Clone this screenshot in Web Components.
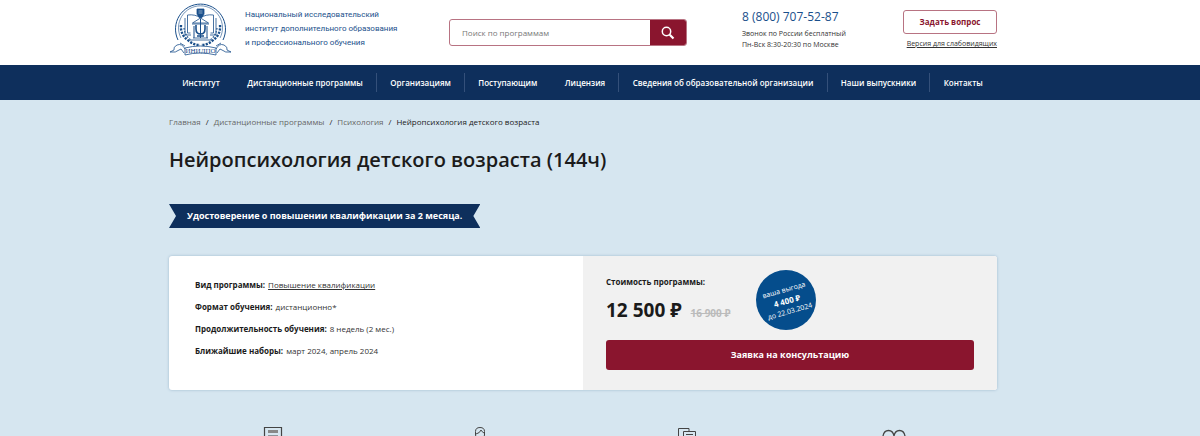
<!DOCTYPE html>
<html lang="ru">
<head>
<meta charset="utf-8">
<title>Нейропсихология детского возраста</title>
<style>
  :root { --navy:#0e2f5c; --wine:#8a152e; --blue:#1a4f8b; --sky:#d6e6f0; --left:169px; --right:203px; }
  body { margin:0; background:var(--sky); color:#1b1b1b; font:8px/12px "Open Sans","Noto Sans",sans-serif; overflow:hidden; }
</style>
</head>
<body>
<site-header></site-header>
<site-nav></site-nav>
<program-page></program-page>
<script>
const define = (name, html) => customElements.define(name, class extends HTMLElement {
  constructor() {
    super();
    const t = document.createElement('template');
    t.innerHTML = '<style>*{box-sizing:border-box}a{color:inherit}button,input{font:inherit;margin:0}</style>' + html;
    this.attachShadow({mode:'open'}).append(t.content.cloneNode(true));
  }
});

define('site-logo', `
<style>
  :host{display:block}
  a{display:flex;align-items:flex-start;gap:13px;color:var(--blue);text-decoration:none;font:8px/14px Roboto,"Open Sans",sans-serif}
  svg{display:block;flex:none;width:63px;height:54px}
  span{white-space:nowrap;padding-top:6px}
</style>
<a href="#">
<svg viewBox="0 2 63 54" fill="none" stroke="#1a4f8b" stroke-width=".8">
  <path d="M9 40A25 25 0 1 1 54 40" stroke-width="1"/>
  <path d="M12 38A22 22 0 1 1 51 38" stroke-width=".6"/>
  <path d="M28 9h7v5q-1 3-3.500 4q-2.500-1-3.500-4z" fill="#1a4f8b"/>
  <path d="M29.500 11h4M29.500 13h4" stroke="#fff" stroke-width=".5"/>
  <path d="M31.500 18q-5-4-13-3v18h3M31.500 18q5-4 13-3v18h-3M16 18v17h6M47 18v17h-6"/>
  <path d="M31.500 18l-8 5h16zM23 24h17M24 38h15M21 40h21"/>
  <path d="M31.500 19v19M25 26v12M38 26v12" stroke-width="1"/>
  <path d="M27 25v4q0 5 4.500 5t4.500-5v-4M28 36h7" stroke-width="1.600"/>
  <path d="M12 25q-1 10 8 16q5 4 11 4M51 25q1 10-8 16q-5 4-11 4" stroke-width="2.400" stroke-dasharray="2.200 1.200"/>
  <path d="M15 28q1 8 7 12M48 28q-1 8-7 12" stroke-width="1.200" stroke-dasharray="1.500 1.500"/>
  <path d="M16 48q15-4 31 0v7q-16-4-31 0zM16 49q-3-6-8-4q-4 2-3 5l-4 2q6 1 9-2l2-1l3 4M47 49q3-6 8-4q4 2 3 5l4 2q-6 1-9-2l-2-1l-3 4M11 43l5 3M52 43l-5 3" fill="#fff"/>
  <text x="31.500" y="53" text-anchor="middle" font-family="Liberation Serif, serif" font-size="7" fill="#1a4f8b" stroke="none">ИНИДПО</text>
</svg>
<span>Национальный исследовательский<br>институт дополнительного образования<br>и профессионального обучения</span>
</a>`);

define('search-box', `
<style>
  :host{display:block}
  form{display:flex;height:27px;border:1px solid #b87382;border-radius:3px;overflow:hidden;background:#fff}
  input{flex:1;min-width:0;border:0;outline:0;padding:0 12px;background:none;font-size:8px}
  input::placeholder{color:#777;opacity:1}
  button{width:36px;border:0;padding:0;background:var(--wine);display:grid;place-items:center}
  svg{width:14px;height:14px}
</style>
<form role="search"><input type="text" aria-label="Поиск" placeholder="Поиск по программам"><button type="button" aria-label="Найти"><svg viewBox="0 0 14 14" fill="none" stroke="#fff"><circle cx="5.500" cy="5.500" r="4.200" stroke-width="1.500"/><path d="M8.700 8.700l3.800 3.800" stroke-width="2.200"/></svg></button></form>`);

define('site-header', `
<style>
  :host{display:grid;grid-template-columns:280px 238px 1fr auto;align-items:start;min-height:65px;padding:0 var(--right) 0 var(--left);background:#fff}
  site-logo{padding-top:2px}
  search-box{padding-top:19px}
  .phone{padding:9px 0 0 55px;font-size:7px;line-height:11px;color:#333}
  .phone a{display:block;font-size:12px;line-height:16px;font-weight:500;color:var(--blue);text-decoration:none;margin-bottom:3px}
  .ask{display:flex;flex-direction:column;align-items:flex-end;padding-top:10px;gap:4px;font-size:7px;color:#333}
  button{width:94px;height:24px;padding:0;border:1px solid #b87382;border-radius:3px;background:#fff;color:var(--wine);font-size:8px;font-weight:700}
</style>
<site-logo></site-logo>
<search-box></search-box>
<div class="phone"><a href="tel:88007075287">8 (800) 707-52-87</a>Звонок по России бесплатный<br>Пн-Вск 8:30-20:30 по Москве</div>
<div class="ask"><button type="button">Задать вопрос</button><a href="#">Версия для слабовидящих</a></div>`);

define('site-nav', `
<style>
  :host{display:block;background:var(--navy);padding:0 var(--right) 0 var(--left)}
  nav{display:flex;align-items:center;height:35px}
  a{flex:1 1 auto;text-align:center;white-space:nowrap;line-height:19px;color:#fff;text-decoration:none;font-weight:600;font-size:8px;border-right:1px solid transparent}
  .line{border-color:#34507a}
</style>
<nav><a href="#">Институт</a><a href="#" class="line">Дистанционные программы</a><a href="#" class="line">Организациям</a><a href="#">Поступающим</a><a href="#" class="line">Лицензия</a><a href="#" class="line">Сведения об образовательной организации</a><a href="#" class="line">Наши выпускники</a><a href="#">Контакты</a></nav>`);

define('price-badge', `
<style>
  :host{display:grid;place-items:center;width:60px;height:60px;border-radius:50%;background:#054d8c;color:#fff;text-align:center;font-size:7px;line-height:11px}
  div{transform:rotate(-16deg);white-space:nowrap}
  b{display:block;font-size:8px}
</style>
<div><slot name="top"></slot><b><slot></slot></b><slot name="bottom"></slot></div>`);

define('program-card', `
<style>
  :host{display:grid;grid-template-columns:1fr 1fr;min-height:134px;border-radius:3px;overflow:hidden;background:#fff;box-shadow:0 0 3px #9db8cc}
  dl{margin:0;padding:23px 26px 22px;font-size:8px;line-height:12px}
  dl div{display:flex;gap:3px;padding-bottom:10px}
  dt,dd{margin:0}
  dt{font-weight:700}
  dd{color:#333}
  .cost{background:#f1f1f1;padding:14px 23px 20px;display:flex;flex-direction:column;justify-content:space-between}
  .top{display:flex;gap:26px}
  h2{margin:6px 0 8px;font-size:8px;line-height:12px;font-weight:700}
  .price{display:flex;align-items:baseline;gap:9px;white-space:nowrap}
  strong{font-size:19px;line-height:28px}
  s{font-size:10px;font-weight:700;color:#bbb}
  button{height:30px;border:0;border-radius:3px;background:var(--wine);color:#fff;font-size:9px;font-weight:700}
</style>
<dl>
<div><dt>Вид программы:</dt><dd><a href="#">Повышение квалификации</a></dd></div>
<div><dt>Формат обучения:</dt><dd>дистанционно*</dd></div>
<div><dt>Продолжительность обучения:</dt><dd>8 недель (2 мес.)</dd></div>
<div><dt>Ближайшие наборы:</dt><dd>март 2024, апрель 2024</dd></div>
</dl>
<div class="cost">
<div class="top"><div><h2>Стоимость программы:</h2><div class="price"><strong>12 500 ₽</strong><s>16 900 ₽</s></div></div>
<price-badge><span slot="top">ваша выгода</span>4 400 ₽<span slot="bottom">до 22.03.2024</span></price-badge></div>
<button type="button">Заявка на консультацию</button>
</div>`);

define('feature-icons', `
<style>
  :host{display:grid;grid-template-columns:repeat(4,1fr);justify-items:center}
  svg{width:26px;height:26px;display:block}
</style>
<svg viewBox="0 0 26 26" fill="none" stroke="#444"><path d="M4.500 21V1.500h17V21z" stroke-width="1.200"/><path d="M8 5.500h10" stroke="#888" stroke-width="3"/><path d="M8 10h10M8 13h10"/></svg>
<svg viewBox="0 0 26 26" fill="none" stroke="#444"><path d="M8.500 9V5.500q0-4 4.500-4t4.500 4V9q-1 5-4.500 5T8.500 9zM9 8q4-1 5-4q1 2 3 3M4 22q1-6 9-7q8 1 9 7"/></svg>
<svg viewBox="0 0 26 26" fill="none" stroke="#444"><path d="M9 18H4.500V2.500H15V5M9.500 5.500h12V22h-12zM12 8.500h7M12 11.500h7"/></svg>
<svg viewBox="0 0 26 26" fill="none" stroke="#444"><path d="M13 10q-1-5.500-5.500-5.500T2 10q0 5 11 12Q24 15 24 10q-1-5.500-5.500-5.500T13 10" stroke-width="1.300"/></svg>`);

define('program-page', `
<style>
  :host{display:block;padding:16px var(--right) 0 var(--left)}
  .crumbs{display:flex;gap:5px;font-size:8px;line-height:12px}
  .crumbs a{color:#666;text-decoration:none}
  h1{margin:17px 0 0;font-size:20px;line-height:30px;font-weight:600}
  .ribbon{width:fit-content;margin:29px 0 28px;padding:0 18px;line-height:24px;background:var(--navy);color:#fff;font-size:9px;font-weight:700;clip-path:polygon(0 0,100% 0,calc(100% - 7px) 50%,100% 100%,0 100%,7px 50%)}
  feature-icons{margin-top:36px}
</style>
<nav class="crumbs" aria-label="Навигация"><a href="#">Главная</a><span>/</span><a href="#">Дистанционные программы</a><span>/</span><a href="#">Психология</a><span>/</span><span>Нейропсихология детского возраста</span></nav>
<h1>Нейропсихология детского возраста (144ч)</h1>
<div class="ribbon">Удостоверение о повышении квалификации за 2 месяца.</div>
<program-card></program-card>
<feature-icons></feature-icons>`);
</script>
</body>
</html>
